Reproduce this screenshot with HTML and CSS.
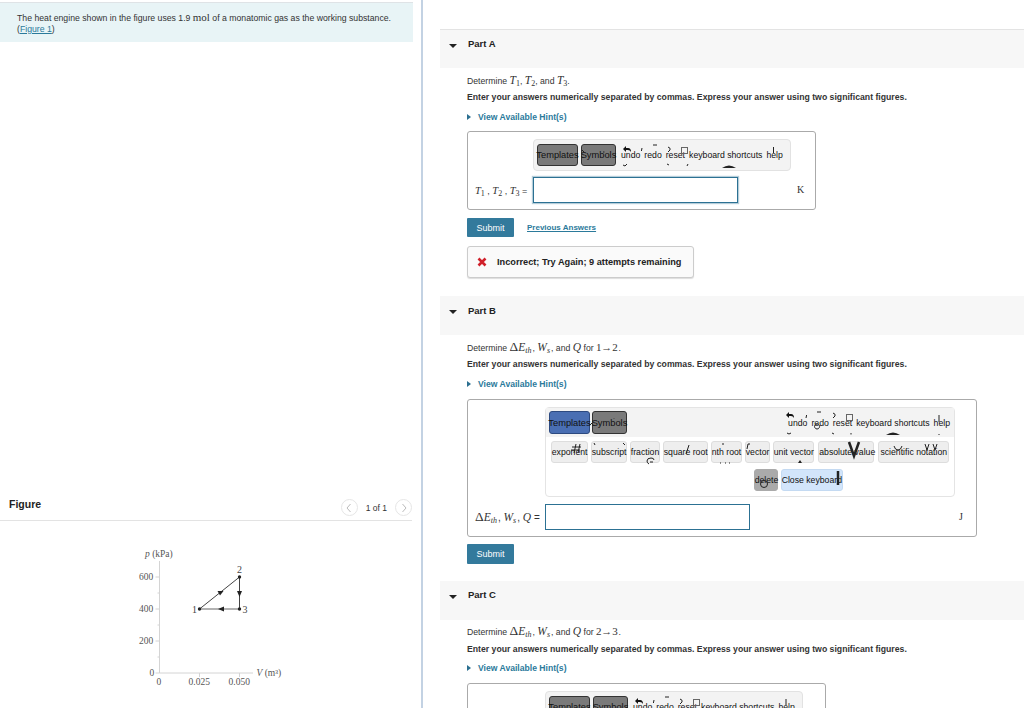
FILE: index.html
```html
<!DOCTYPE html>
<html lang="en">
<head>
<meta charset="utf-8">
<title>Heat engine</title>
<link rel="stylesheet" href="styles.css">
</head>
<body>
<div class="page">
  <section class="left">
    <div class="intro">
      <p>The heat engine shown in the figure uses 1.9 <span class="serif">mol</span> of a monatomic gas as the working substance.<br>(<a href="#">Figure 1</a>)</p>
    </div>
    <div class="figure-head">
      <h2>Figure</h2>
      <div class="pager">
        <span class="circle"><svg width="18" height="18" viewBox="0 0 18 18"><path d="M10.5 5 L7 9 L10.5 13" fill="none" stroke="#bbb" stroke-width="1"/></svg></span>
        <span class="pager-text">1 of 1</span>
        <span class="circle"><svg width="18" height="18" viewBox="0 0 18 18"><path d="M7.5 5 L11 9 L7.5 13" fill="none" stroke="#bbb" stroke-width="1"/></svg></span>
      </div>
    </div>
    <svg class="graph" width="422" height="170" viewBox="0 538 422 170">
      <g stroke="#d4d4d4" fill="none">
        <path d="M159.5 560V672H253"/>
        <path d="M155.5 576H159.5M155.5 608H159.5M155.5 640H159.5M155.5 672H159.5M157.5 592H159.5M157.5 624H159.5M157.5 656H159.5"/>
        <path d="M199.5 672V676M239.5 672V676"/>
      </g>
      <g fill="none" stroke="#444" stroke-width="1">
        <path d="M199.5 608L239.5 576V608"/>
      </g>
      <path d="M199.5 608H239.5" stroke="#999" stroke-width="1.500"/>
      <g fill="#222">
        <circle cx="199.5" cy="608" r="1.7"/><circle cx="239.5" cy="576" r="1.7"/><circle cx="239.5" cy="608" r="1.7"/>
        <path d="M237 590H242L239.500 596Z"/>
        <path d="M217.500 590H223.500L220 594.500Z"/>
        <path d="M218 608L224 605.500V610.500Z"/>
      </g>
      <g class="gt">
        <text x="145" y="555.500"><tspan font-style="italic">p</tspan> (kPa)</text>
        <text x="139" y="579">600</text>
        <text x="139" y="611">400</text>
        <text x="139" y="643">200</text>
        <text x="149.500" y="675">0</text>
        <text x="156.500" y="684">0</text>
        <text x="188.500" y="684">0.025</text>
        <text x="228.500" y="684">0.050</text>
        <text x="256.500" y="675"><tspan font-style="italic">V</tspan> (m³)</text>
        <text class="pt" x="237" y="572">2</text>
        <text class="pt" x="192" y="611.500">1</text>
        <text class="pt" x="242.500" y="611.500">3</text>
      </g>
    </svg>
  </section>
  <section class="right">
    <header class="part-head first"><i class="tri-down"></i><span>Part A</span></header>
    <div class="part-body">
      <p class="q">Determine <span class="m">T<sub>1</sub></span>, <span class="m">T<sub>2</sub></span>, and <span class="m">T<sub>3</sub></span>.</p>
      <p class="instr">Enter your answers numerically separated by commas. Express your answer using two significant figures.</p>
      <p class="hint"><i class="tri-right"></i><a href="#">View Available Hint(s)</a></p>
      <div class="answer answer-a">
        <div class="toolbar tb-a">
          <button class="mode gray t1">Templates</button><button class="mode gray t2">Symbols</button>
          <div class="tools"><span>undo</span><span>redo</span><span>reset</span><span>keyboard shortcuts</span><span>help</span></div>
          <svg class="frag" width="257" height="32" viewBox="533 139 257 32">
            <path d="M622 148l3-3v2h2q3 0 3 4q-1-2-3-2h-2v2z" fill="#111"/>
            <path d="M641 147l-.6 3M652 144h4M667 146q3 1 2 3l-2 2M622 164l2 1 2-2M666 163l2 1M686 165l1-2M772.500 146v6M581 149l3 3M602 151h1.500" stroke="#222" fill="none"/>
            <rect x="680.500" y="146.500" width="6" height="6" fill="none" stroke="#666"/>
            <path d="M721 167q7-5 14 0z" fill="#222"/>
          </svg>
        </div>
        <div class="entry">
          <label class="eq"><span class="m">T<sub>1</sub></span> , <span class="m">T<sub>2</sub></span> , <span class="m">T<sub>3</sub></span> =</label>
          <div class="field focus"></div>
          <span class="unit">K</span>
        </div>
      </div>
      <div class="actions">
        <button class="submit short">Submit</button>
        <a href="#" class="prev">Previous Answers</a>
      </div>
      <div class="feedback"><svg width="10" height="10" viewBox="0 0 10 10"><path d="M1.500 1.500L8.500 8.500M8.500 1.500L1.500 8.500" stroke="#d0202a" stroke-width="2.600"/></svg><b>Incorrect; Try Again; 9 attempts remaining</b></div>
    </div>

    <header class="part-head second"><i class="tri-down"></i><span>Part B</span></header>
    <div class="part-body">
      <p class="q">Determine <span class="m"><span class="up">Δ</span>E<sub class="i">th</sub></span>, <span class="m">W<sub class="i">s</sub></span>, and <span class="m">Q</span> for <span class="serif arrow">1→2</span>.</p>
      <p class="instr">Enter your answers numerically separated by commas. Express your answer using two significant figures.</p>
      <p class="hint"><i class="tri-right"></i><a href="#">View Available Hint(s)</a></p>
      <div class="answer answer-b">
        <div class="keyboard">
          <div class="kb-top">
            <button class="mode blue k1">Templates</button><button class="mode gray k2">Symbols</button>
            <div class="tools"><span>undo</span><span>redo</span><span>reset</span><span>keyboard shortcuts</span><span>help</span></div>
          </div>
          <div class="kb-row">
            <button class="key w-exp">exponent</button><button class="key w-sub">subscript</button><button class="key w-frac">fraction</button><button class="key w-sq">square root</button><button class="key w-nth">nth root</button><button class="key w-vec">vector</button><button class="key w-unit">unit vector</button><button class="key w-abs">absolute value</button><button class="key w-sci">scientific notation</button>
          </div>
          <div class="kb-row end">
            <button class="key del">delete</button><button class="key close">Close keyboard</button>
          </div>
          <svg class="frag" width="409" height="89" viewBox="545 407 409 89">
            <path d="M785 414l3-3v2h2q3 0 3 4q-1-2-3-2h-2v2z" fill="#111"/>
            <path d="M805 417l.6-3M816 411h4M832 412q3 1 2 3l-2 2M786 432l2 1 2-1M831 432l2 1M850 432v1.500M938 414v7M938 433v1M593 442l1 2M622 442l2 2M722 442v2M719 462h1M724 462h1M728 462h1M589 424l2-2M613 417v.5" stroke="#222" fill="none"/>
            <rect x="845.500" y="413.500" width="6" height="6" fill="none" stroke="#666"/>
            <path d="M885 434q7-5 14 0z" fill="#222"/>
            <path d="M573 452l2-9M577 452l2-9M571 446h9M570 449h9M685 453l3-9M746 448l1-5h2M646 460q0-3 4-3 3 0 3 2M646 460q0 2 2 3M652 461h-3M816 423a2.500 2.500 0 1 0 .1 0M893 445q1 4 4 4t4-4M924 443l2 6 2-6M932 443l2 6 2-6" stroke="#222" fill="none"/>
            <path d="M848 441l5 14 5-14" stroke="#222" stroke-width="2.500" fill="none"/>
            <path d="M797 462l2-3 2 3z" fill="#222"/>
            <circle cx="763" cy="483" r="3.500" stroke="#222" fill="none"/>
            <path d="M837 470v14" stroke="#222" stroke-width="2.500"/>
          </svg>
        </div>
        <div class="entry entry-b">
          <label class="eq"><span class="m"><span class="up">Δ</span>E<sub class="i">th</sub></span>, <span class="m">W<sub class="i">s</sub></span>, <span class="m">Q</span> =</label>
          <div class="field"></div>
          <span class="unit">J</span>
        </div>
      </div>
      <div class="actions"><button class="submit">Submit</button></div>
    </div>

    <header class="part-head third"><i class="tri-down"></i><span>Part C</span></header>
    <div class="part-body part-c">
      <p class="q">Determine <span class="m"><span class="up">Δ</span>E<sub class="i">th</sub></span>, <span class="m">W<sub class="i">s</sub></span>, and <span class="m">Q</span> for <span class="serif arrow">2→3</span>.</p>
      <p class="instr">Enter your answers numerically separated by commas. Express your answer using two significant figures.</p>
      <p class="hint"><i class="tri-right"></i><a href="#">View Available Hint(s)</a></p>
      <div class="answer answer-c">
        <div class="toolbar tb-c">
          <button class="mode gray t1">Templates</button><button class="mode gray t2">Symbols</button>
          <div class="tools"><span>undo</span><span>redo</span><span>reset</span><span>keyboard shortcuts</span><span>help</span></div>
          <svg class="frag" width="257" height="20" viewBox="545 691 257 20">
            <path d="M634 700l3-3v2h2q3 0 3 4q-1-2-3-2h-2v2z" fill="#111"/>
            <path d="M653 699l-.6 3M664 696h4M679 698q3 1 2 3l-2 2M785 698v6" stroke="#222" fill="none"/>
            <rect x="692.500" y="698.500" width="6" height="6" fill="none" stroke="#666"/>
          </svg>
        </div>
      </div>
    </div>
  </section>
</div>
</body>
</html>
```
FILE: styles.css
```css
* { box-sizing: border-box; }
html, body { margin: 0; height: 708px; overflow: hidden; background: #fff; }
body { font-family: "Liberation Sans", Arial, sans-serif; color: #333; font-size: 9px; }
p { margin: 0; }
a { color: #2b7a9b; }
button { font-family: inherit; padding: 0; color: #111; }
.serif { font-family: "Liberation Serif", serif; font-size: 11px; }
.arrow { letter-spacing: -0.2px; margin-right: 1px; }
.m { font-family: "Liberation Serif", serif; font-style: italic; font-size: 11.500px; color: #333; }
.m sub { font-size: 8px; font-style: normal; vertical-align: baseline; position: relative; top: 2px; line-height: 0; }
.m sub.i { font-style: italic; margin-right: 1px; }
.up { font-style: normal; font-size: 13.500px; }

.page { display: grid; grid-template-columns: 423px 1fr; height: 708px; }

/* left pane */
.left { border-right: 2px solid #c3d2e3; height: 708px; padding-top: 2px; overflow: hidden; }
.intro { width: 413px; height: 40px; background: #e8f4f6; border-top: 1px solid #dfe3e6; padding: 9px 0 0 17px; line-height: 11px; color: #333; font-size: 8.700px; }
.intro a { color: #2b7a9b; }
.figure-head { display: flex; align-items: center; justify-content: space-between; width: 412px; height: 37px; margin-top: 442px; padding: 11px 0 0 9px; border-bottom: 1px solid #e3e3e3; }
.figure-head h2 { margin: 0 0 8px; font-size: 10.500px; font-weight: bold; color: #222; }
.pager { display: flex; align-items: center; gap: 8px; }
.pager-text { font-size: 8.500px; color: #333; }
.circle { display: flex; width: 17px; height: 17px; border: 1px solid #e6e6e6; border-radius: 50%; align-items: center; justify-content: center; }
.circle svg { flex: none; }
.graph { display: block; margin-top: 18px; }
.gt text { font-family: "Liberation Serif", serif; font-size: 9.500px; fill: #555; }
.gt text.pt { font-size: 10px; fill: #444; }

/* right pane */
.right { height: 708px; overflow: hidden; padding-top: 29px; }
.part-head { display: flex; align-items: flex-start; height: 39px; margin-left: 17px; padding: 9px 0 0 28px; background: #f7f7f7; font-size: 9.500px; font-weight: bold; color: #222; position: relative; line-height: 11px; }
.part-head.first { border-top: 1px solid #e3e3e3; padding-top: 8px; }
.part-head.second { margin-top: 18px; }
.part-head.third { margin-top: 17px; padding-top: 8px; }
.tri-down { position: absolute; left: 9px; top: 14px; border-left: 4px solid transparent; border-right: 4px solid transparent; border-top: 4px solid #222; }
.part-body { padding: 5px 0 0 44px; }
.q { line-height: 14px; height: 14px; font-size: 8.700px; color: #333; white-space: nowrap; }
.instr { margin-top: 4px; line-height: 12px; font-size: 8.700px; font-weight: bold; color: #333; white-space: nowrap; }
.hint { margin-top: 8px; line-height: 12px; height: 12px; display: flex; align-items: center; }
.hint a { font-size: 8.600px; font-weight: bold; text-decoration: none; }
.tri-right { border-top: 3.500px solid transparent; border-bottom: 3.500px solid transparent; border-left: 4px solid #2b6f90; margin-right: 7px; }

.part-c { padding-top: 4px; }
.part-c .instr { margin-top: 5px; }
.part-c .hint { margin-top: 7px; }

.answer { border: 1px solid #aaa; border-radius: 3px; margin-top: 8px; position: relative; }
.answer-a { width: 349px; height: 79px; padding: 7px 0 0 65px; }
.answer-b { width: 510px; height: 138px; padding: 7px 0 0 77px; margin-top: 9px; }
.answer-c { width: 359px; height: 60px; padding: 7px 0 0 77px; margin-top: 9px; }

.toolbar { display: flex; align-items: center; width: 258px; height: 32px; padding-left: 3px; background: #f3f3f3; border: 1px solid #e2e2e2; border-radius: 4px; position: relative; }
.mode { flex: none; height: 22px; border: 1px solid #333; border-radius: 3px; font-size: 9.300px; color: #111; overflow: visible; white-space: nowrap; display: flex; align-items: center; justify-content: center; }
.gray { background: #7a7a7a; }
.blue { background: #4a6fb3; border-color: #2d4a80; }
.t1 { width: 41px; }
.t2 { width: 35px; margin-left: 3px; }
.tools { display: flex; font-size: 8.700px; color: #111; white-space: nowrap; }
.tools span { display: block; }
.toolbar .tools { margin-left: 5px; gap: 4px; }
.frag { position: absolute; left: 0; top: 0; pointer-events: none; overflow: visible; }

.entry { display: flex; align-items: center; position: relative; margin-top: 6px; margin-left: -58px; }
.eq { width: 58px; white-space: nowrap; font-size: 9px; }
.eq .m { font-size: 10.500px; }
.field { width: 205px; height: 26px; border: 1px solid #2c7193; background: #fff; }
.field.focus { box-shadow: 0 0 1px 1px rgba(44, 113, 147, .35); }
.unit { font-family: "Liberation Serif", serif; font-size: 10px; color: #333; margin: 0 0 2px 59px; }
.entry-b { margin-left: -70px; margin-top: 7px; }
.entry-b .eq { width: 70px; font-size: 10px; }
.entry-b .eq .m { font-size: 11.500px; }
.entry-b .unit { margin-left: 209px; }

.actions { display: flex; align-items: center; gap: 13px; margin-top: 7px; }
.submit { width: 47px; height: 20px; background: #337a9c; border: 0; border-radius: 1px; color: #fff; font-size: 9px; }
.submit.short { height: 19px; margin-top: 1px; }
.prev { font-size: 8px; font-weight: bold; color: #2b7a9b; }
.feedback { display: flex; align-items: center; gap: 10px; width: 227px; height: 32px; margin-top: 9px; padding-left: 9px; border: 1px solid #ccc; border-radius: 3px; background: #fafafa; font-size: 9.200px; color: #222; box-shadow: 0 1px 1px #ddd; white-space: nowrap; }

.keyboard { width: 410px; height: 90px; background: #fff; border: 1px solid #e4e4e4; border-radius: 4px; position: relative; }
.kb-top { display: flex; align-items: center; height: 29px; padding-left: 3px; background: #f3f3f3; }
.k1 { width: 41px; height: 23px; }
.k2 { width: 35px; height: 23px; margin-left: 2px; }
.kb-top .tools { margin-left: auto; padding-right: 4px; gap: 4px; }
.kb-row { display: flex; justify-content: center; gap: 3px; margin-top: 4px; }
.kb-row.end { justify-content: flex-end; padding-right: 111px; margin-top: 6px; }
.key { flex: none; height: 22px; padding: 0; background: #eee; border: 1px solid #ddd; border-radius: 3px; font-size: 8.700px; white-space: nowrap; color: #111; }
.w-exp { width: 37px; }
.w-sub { width: 36px; }
.w-frac { width: 30px; }
.w-sq { width: 45px; }
.w-nth { width: 31px; }
.w-vec { width: 25px; }
.w-unit { width: 41.500px; margin-right: 1px; }
.w-abs { width: 56px; margin-right: 1px; }
.w-sci { width: 71px; }
.del { background: #aaa; border-color: #aaa; width: 24px; }
.close { background: #d2e5fb; border-color: #c4daf2; }
```
